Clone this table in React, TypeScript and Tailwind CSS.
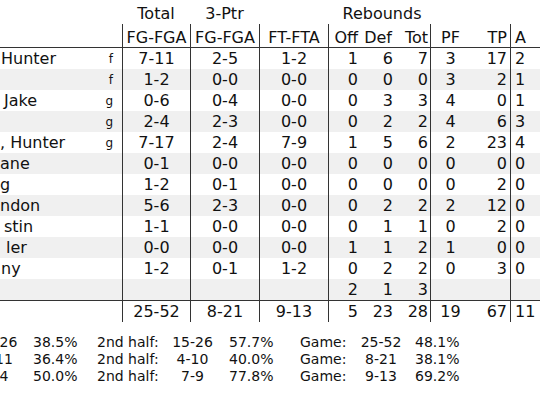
import clsx from 'clsx';

type Player = {
    name: string;
    indent: string;
    pos?: string;
    fg: string;
    tp: string;
    ft: string;
    off: string;
    def: string;
    tot: string;
    pf: string;
    pts: string;
    a: string;
};

const players: Player[] = [
    { name: "Hunter", indent: "pl-[1px]", pos: "f", fg: "7-11", tp: "2-5", ft: "1-2", off: "1", def: "6", tot: "7", pf: "3", pts: "17", a: "2" },
    { name: "", indent: "", pos: "f", fg: "1-2", tp: "0-0", ft: "0-0", off: "0", def: "0", tot: "0", pf: "3", pts: "2", a: "1" },
    { name: "Jake", indent: "pl-[4px]", pos: "g", fg: "0-6", tp: "0-4", ft: "0-0", off: "0", def: "3", tot: "3", pf: "4", pts: "0", a: "1" },
    { name: "", indent: "", pos: "g", fg: "2-4", tp: "2-3", ft: "0-0", off: "0", def: "2", tot: "2", pf: "4", pts: "6", a: "3" },
    { name: ", Hunter", indent: "pl-0", pos: "g", fg: "7-17", tp: "2-4", ft: "7-9", off: "1", def: "5", tot: "6", pf: "2", pts: "23", a: "4" },
    { name: "ane", indent: "pl-0", fg: "0-1", tp: "0-0", ft: "0-0", off: "0", def: "0", tot: "0", pf: "0", pts: "0", a: "0" },
    { name: "g", indent: "pl-0", fg: "1-2", tp: "0-1", ft: "0-0", off: "0", def: "0", tot: "0", pf: "0", pts: "2", a: "0" },
    { name: "ndon", indent: "pl-0", fg: "5-6", tp: "2-3", ft: "0-0", off: "0", def: "2", tot: "2", pf: "2", pts: "12", a: "0" },
    { name: "stin", indent: "pl-[4px]", fg: "1-1", tp: "0-0", ft: "0-0", off: "0", def: "1", tot: "1", pf: "0", pts: "2", a: "0" },
    { name: "ler", indent: "pl-[6px]", fg: "0-0", tp: "0-0", ft: "0-0", off: "1", def: "1", tot: "2", pf: "1", pts: "0", a: "0" },
    { name: "ny", indent: "pl-[1px]", fg: "1-2", tp: "0-1", ft: "1-2", off: "0", def: "2", tot: "2", pf: "0", pts: "3", a: "0" },
    { name: "", indent: "", fg: "", tp: "", ft: "", off: "2", def: "1", tot: "3", pf: "", pts: "", a: "" },
];

const grid = "grid grid-cols-[122px_68px_69px_69px_33px_35px_34px_40px_40px_40px]";
const line = "border-l border-[#333]";

const StatRow = ({ p, shaded }: { p: Player; shaded: boolean }) => (
    <div className={clsx(grid, "h-[21px] items-stretch", shaded && "bg-[#f0f0f0]")}>
        <div className={clsx("flex items-center justify-between whitespace-nowrap", p.indent)}>
            <span>{p.name}</span>
            {p.pos && <span className="text-[12px] pr-[9px] pt-[2px]">{p.pos}</span>}
        </div>
        <div className={clsx(line, "flex items-center justify-center")}>{p.fg}</div>
        <div className={clsx(line, "flex items-center justify-center")}>{p.tp}</div>
        <div className={clsx(line, "flex items-center justify-center")}>{p.ft}</div>
        <div className={clsx(line, "flex items-center justify-end pr-[3px]")}>{p.off}</div>
        <div className="flex items-center justify-end pr-[3px]">{p.def}</div>
        <div className="flex items-center justify-end pr-[2px]">{p.tot}</div>
        <div className={clsx(line, "flex items-center justify-center")}>{p.pf}</div>
        <div className="flex items-center justify-end pr-[3px]">{p.pts}</div>
        <div className={clsx(line, "flex items-center pl-[4px]")}>{p.a}</div>
    </div>
);

const halves = [
    ["10-26", "38.5%", "15-26", "57.7%", "25-52", "48.1%"],
    ["4-11", "36.4%", "4-10", "40.0%", "8-21", "38.1%"],
    ["2-4", "50.0%", "7-9", "77.8%", "9-13", "69.2%"],
];

export default function App() {
    const totals: Player = { name: "", indent: "", fg: "25-52", tp: "8-21", ft: "9-13", off: "5", def: "23", tot: "28", pf: "19", pts: "67", a: "11" };

    return (
        <div
            className="w-[540px] h-[400px] overflow-hidden bg-white text-[#111] text-[16px] leading-[19px]"
            style={{ fontFamily: '"DejaVu Sans", Verdana, sans-serif' }}
        >
            {/* Group headers */}
            <div className={clsx(grid, "h-[24px] pt-[4px]")}>
                <div />
                <div className="text-center">Total</div>
                <div className="text-center">3-Ptr</div>
                <div />
                <div className="col-span-3 text-center pl-[6px]">Rebounds</div>
            </div>

            {/* Column headers */}
            <div className={clsx(grid, "h-[24px] border-b border-[#333]")}>
                <div />
                <div className={clsx(line, "pt-[4px] text-center")}>FG-FGA</div>
                <div className={clsx(line, "pt-[4px] text-center")}>FG-FGA</div>
                <div className={clsx(line, "pt-[4px] text-center")}>FT-FTA</div>
                <div className={clsx(line, "pt-[4px] text-right pr-[3px]")}>Off</div>
                <div className="pt-[4px] text-right pr-[4px]">Def</div>
                <div className="pt-[4px] text-right pr-[2px]">Tot</div>
                <div className={clsx(line, "pt-[4px] text-center")}>PF</div>
                <div className="pt-[4px] text-right pr-[3px]">TP</div>
                <div className={clsx(line, "pt-[4px] pl-[4px]")}>A</div>
            </div>

            {players.map((p, i) => (
                <StatRow key={i} p={p} shaded={i % 2 === 1} />
            ))}

            <div className="border-t border-[#333]">
                <StatRow p={totals} shaded={false} />
            </div>

            {/* Half splits */}
            <div className="mt-[12px] -ml-[28px] text-[14px] leading-[17px]">
                {halves.map((h, i) => (
                    <div key={i} className="grid grid-cols-[50px_75px_69px_53px_81px_56px_50px_80px] whitespace-nowrap">
                        <div className="text-center">{h[0]}</div>
                        <div className="pl-[11px]">{h[1]}</div>
                        <div>2nd half:</div>
                        <div className="text-center">{h[2]}</div>
                        <div className="pl-[10px]">{h[3]}</div>
                        <div>Game:</div>
                        <div className="text-center">{h[4]}</div>
                        <div className="pl-[9px]">{h[5]}</div>
                    </div>
                ))}
            </div>
        </div>
    );
}
